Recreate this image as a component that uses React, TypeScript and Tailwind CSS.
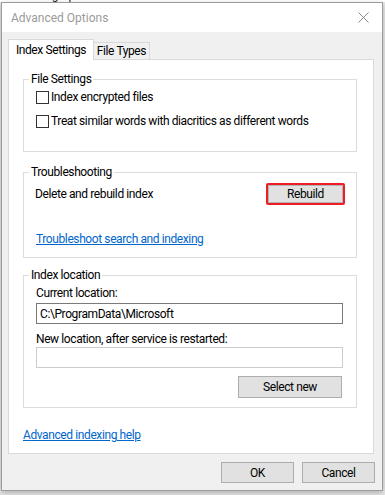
import React from "react";

const font = { fontFamily: "Roboto, 'Liberation Sans', sans-serif" };

function Checkbox({ label }: { label: string }) {
  return (
    <div className="flex h-[20px] items-center">
      <div className="h-[13px] w-[13px] border border-[#333333] bg-white" />
      <span className="ml-[2px] leading-[16px]">{label}</span>
    </div>
  );
}

function Group({ title, children, className }: { title: string; children: React.ReactNode; className?: string }) {
  return (
    <fieldset className={"ml-[14px] w-[334px] border border-[#dcdcdc] p-0 " + (className ?? "")}>
      <legend className="ml-[5px] px-[2px] leading-[16px]">{title}</legend>
      {children}
    </fieldset>
  );
}

function WinButton({ children, className }: { children: React.ReactNode; className?: string }) {
  return (
    <button
      className={
        "flex items-center justify-center border border-[#adadad] bg-[#e1e1e1] leading-[16px] text-black " +
        (className ?? "")
      }
    >
      {children}
    </button>
  );
}

export default function App() {
  return (
    <div
      className="relative h-[495px] w-[385px] overflow-hidden bg-[#e9e9e9] text-[12px] tracking-[-0.4px] text-black"
      style={font}
    >
      <div className="h-[2px] overflow-hidden bg-white">
        <div className="-mt-[12px] ml-[16px] leading-[14px] text-[#222]">Indexing Options</div>
      </div>
      <div className="ml-[1px] flex h-[489px] w-[382px] flex-col border border-[#9c9c9c] bg-[#f0f0f0] shadow-[0_2px_6px_rgba(0,0,0,0.25)]">
        {/* Title bar */}
        <div className="flex h-[29px] items-center justify-between bg-white pl-[9px] pr-[9px]">
          <span className="text-[12px] tracking-normal text-[#9b9b9b]">Advanced Options</span>
          <svg width="11" height="11" viewBox="0 0 11 11" className="mr-[4px]">
            <path d="M0.5 0.5 L10.5 10.5 M10.5 0.5 L0.5 10.5" stroke="#8a8a8a" strokeWidth="1" fill="none" />
          </svg>
        </div>
        {/* Body */}
        <div className="flex flex-1 flex-col pt-[7px]">
          {/* Tabs */}
          <div className="flex h-[20px] items-end pl-[6px]">
            <div className="relative z-10 -mb-px flex h-[21px] w-[86px] items-start justify-center border border-b-0 border-[#d9d9d9] bg-white pt-[2px] leading-[16px]">
              Index Settings
            </div>
            <div className="-ml-px flex h-[17px] w-[57px] items-center justify-center border border-b-0 border-[#d9d9d9] bg-[#f0f0f0] leading-[16px]">
              File Types
            </div>
          </div>
          {/* Panel */}
          <div className="ml-[6px] flex h-[395px] w-[366px] flex-col border border-[#d9d9d9] bg-white">
            <Group title="File Settings" className="mt-[11px]">
              <div className="flex flex-col gap-[4px] pb-[20px] pl-[12px]">
                <Checkbox label="Index encrypted files" />
                <Checkbox label="Treat similar words with diacritics as different words" />
              </div>
            </Group>
            <Group title="Troubleshooting" className="mt-[12px]">
              <div className="flex flex-col pb-[10px] pl-[11px] pr-[13px]">
                <div className="mt-[3px] flex h-[22px] items-center justify-between">
                  <span className="leading-[16px]">Delete and rebuild index</span>
                  <div className="-mr-[2px] rounded-[2px] border-[2px] border-[#ee1c25]">
                    <WinButton className="h-[18px] w-[75px] border-[#b5b5b5]">Rebuild</WinButton>
                  </div>
                </div>
                <a className="ml-[1px] mt-[26px] self-start leading-[16px] text-[#0066cc] underline">
                  Troubleshoot search and indexing
                </a>
              </div>
            </Group>
            <Group title="Index location" className="mt-[9px]">
              <div className="flex flex-col pb-[9px] pl-[12px] pr-[13px]">
                <span className="mt-[2px] leading-[16px]">Current location:</span>
                <div className="mt-[2px] flex h-[21px] items-center border border-[#7a7a7a] bg-white pl-[3px] leading-[16px]">
                  C:\ProgramData\Microsoft
                </div>
                <span className="mt-[7px] leading-[16px]">New location, after service is restarted:</span>
                <div className="h-[21px] border border-[#cccccc] bg-white" />
                <div className="mt-[8px] flex justify-end">
                  <WinButton className="mr-[1px] h-[22px] w-[104px]">Select new</WinButton>
                </div>
              </div>
            </Group>
            <a className="ml-[14px] mt-[19px] self-start leading-[16px] text-[#0066cc] underline">
              Advanced indexing help
            </a>
          </div>
          {/* Bottom buttons */}
          <div className="mr-[7px] mt-[8px] flex justify-end gap-[8px]">
            <WinButton className="h-[21px] w-[73px]">OK</WinButton>
            <WinButton className="h-[21px] w-[73px]">Cancel</WinButton>
          </div>
        </div>
      </div>
    </div>
  );
}
